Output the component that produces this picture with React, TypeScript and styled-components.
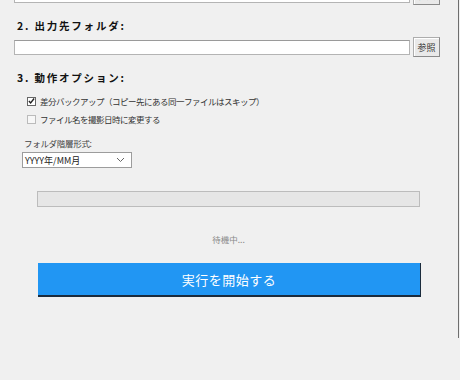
import React from 'react'
import styled, { createGlobalStyle } from 'styled-components'

const Global = createGlobalStyle`
  html, body {
    margin: 0;
    padding: 0;
    background: #f0f0f0;
    overflow: hidden;
  }
  * { box-sizing: border-box; }
`

const App = () => {
  return (
    <>
      <Global />
      <Window>
        <PathRow style={{ marginTop: -15 }}>
          <PathInput />
          <SmallButton>参照</SmallButton>
        </PathRow>

        <Heading top={15}>2. 出力先フォルダ:</Heading>
        <PathRow style={{ marginTop: 5 }}>
          <PathInput />
          <SmallButton>参照</SmallButton>
        </PathRow>

        <Heading top={15}>3. 動作オプション:</Heading>

        <Options>
          <CheckRow>
            <Box checked>
              <svg width="8" height="8" viewBox="0 0 8 8">
                <path d="M1 4 L3 6.2 L7 1.2" stroke="#222" strokeWidth="1.6" fill="none" />
              </svg>
            </Box>
            <CheckLabel>差分バックアップ（コピー先にある同一ファイルはスキップ）</CheckLabel>
          </CheckRow>
          <CheckRow>
            <Box />
            <CheckLabel>ファイル名を撮影日時に変更する</CheckLabel>
          </CheckRow>
        </Options>

        <FieldLabel>フォルダ階層形式:</FieldLabel>
        <Select>
          <span>YYYY年/MM月</span>
          <svg width="9" height="6" viewBox="0 0 9 6">
            <path d="M1 1 L4.5 4.5 L8 1" stroke="#666" strokeWidth="1" fill="none" />
          </svg>
        </Select>

        <Progress />
        <Status>待機中...</Status>
        <RunButton>実行を開始する</RunButton>
      </Window>
    </>
  )
}

export default App

const Window = styled.div`
  width: 459px;
  height: 338px;
  border-right: 1px solid #6e6e6e;
  padding-left: 14px;
  display: flex;
  flex-direction: column;
  font-family: "Noto Sans CJK JP", "Noto Sans", sans-serif;
  color: #222;
`

const PathRow = styled.div`
  display: flex;
  align-items: center;
  gap: 3px;
  height: 20px;
`

const PathInput = styled.div`
  width: 396px;
  height: 15px;
  background: #fff;
  border: 1px solid #b4b4b4;
  border-top-color: #9a9a9a;
`

const SmallButton = styled.div`
  width: 27px;
  height: 20px;
  display: flex;
  align-items: center;
  justify-content: center;
  font-size: 9px;
  color: #333;
  background: #e9e9e9;
  border: 1px solid #adadad;
  border-right-color: #8a8a8a;
  border-bottom-color: #8a8a8a;
  box-shadow: inset 1px 1px 0 #fff;
`

const Heading = styled.div<{ top: number }>`
  margin-top: ${({ top }) => top}px;
  padding-left: 3px;
  font-size: 10.5px;
  font-weight: 700;
  letter-spacing: 1.8px;
  line-height: 12px;
  color: #111;
`

const Options = styled.div`
  margin-top: 11px;
  padding-left: 13px;
  display: flex;
  flex-direction: column;
  gap: 6px;
`

const CheckRow = styled.div`
  display: flex;
  align-items: center;
  gap: 4px;
  height: 12px;
`

const Box = styled.div<{ checked?: boolean }>`
  width: 9px;
  height: 9px;
  display: flex;
  align-items: center;
  justify-content: center;
  background: ${({ checked }) => (checked ? '#fff' : '#f7f7f7')};
  border: 1px solid ${({ checked }) => (checked ? '#666' : '#bbb')};
`

const CheckLabel = styled.span`
  font-size: 8.5px;
  letter-spacing: -0.5px;
  color: #333;
  line-height: 12px;
`

const FieldLabel = styled.div`
  margin-top: 13px;
  padding-left: 10px;
  font-size: 8.5px;
  letter-spacing: -0.3px;
  color: #444;
  line-height: 11px;
`

const Select = styled.div`
  margin-top: 3px;
  margin-left: 8px;
  width: 110px;
  height: 16px;
  display: flex;
  align-items: center;
  justify-content: space-between;
  padding: 0 6px 0 2px;
  background: #fff;
  border: 1px solid #9c9c9c;
  font-size: 9px;
  color: #222;
`

const Progress = styled.div`
  margin-top: 23px;
  margin-left: 23px;
  width: 383px;
  height: 16px;
  background: #e6e6e6;
  border: 1px solid #bcbcbc;
`

const Status = styled.div`
  margin-top: 26px;
  margin-left: 23px;
  width: 383px;
  text-align: center;
  font-size: 8.5px;
  color: #8a8a8a;
  line-height: 12px;
`

const RunButton = styled.div`
  margin-top: 18px;
  margin-left: 24px;
  width: 383px;
  height: 34px;
  display: flex;
  align-items: center;
  justify-content: center;
  background: #2196f3;
  border-right: 1px solid #1b2b3c;
  border-bottom: 2px solid #1b2b3c;
  color: #fff;
  font-size: 13px;
  letter-spacing: 0.5px;
`
